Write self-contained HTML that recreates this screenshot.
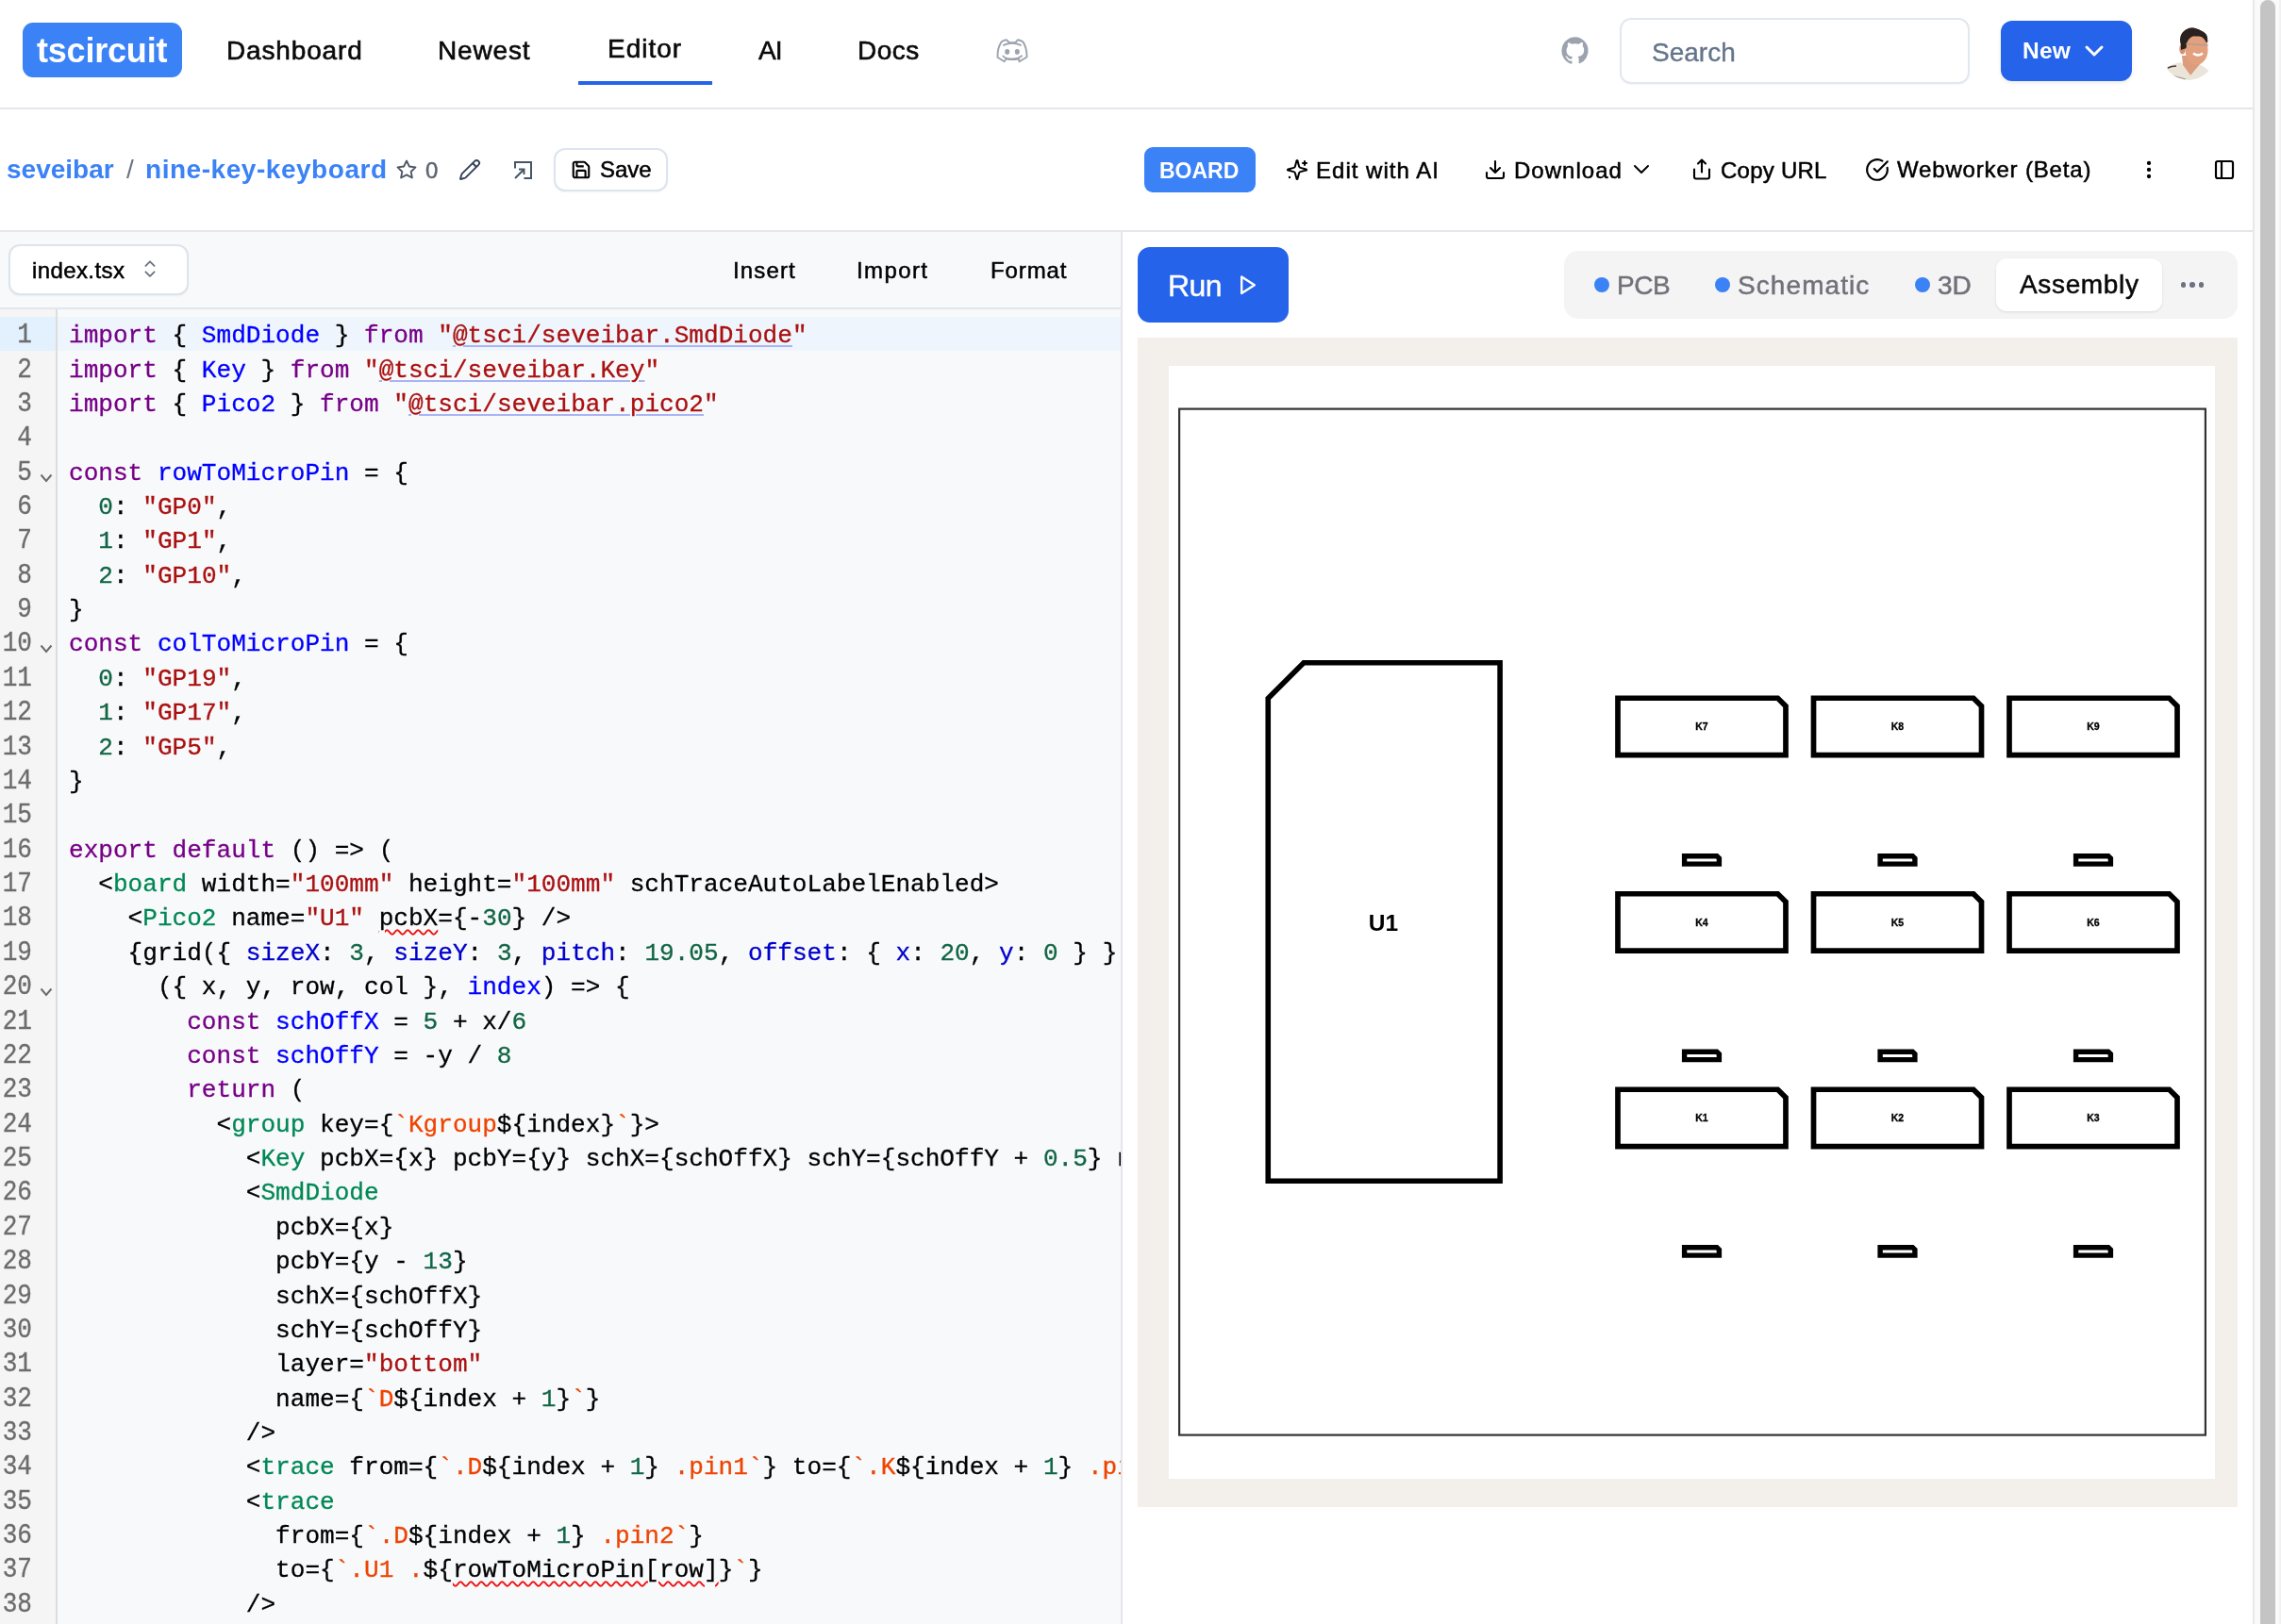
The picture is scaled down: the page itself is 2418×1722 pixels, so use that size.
<!DOCTYPE html>
<html><head><meta charset="utf-8"><title>tscircuit editor</title>
<style>
*{box-sizing:border-box;margin:0;padding:0}
html,body{width:2418px;height:1722px;overflow:hidden;background:#fff}
body{position:relative;font-family:"Liberation Sans",sans-serif}
.t{position:absolute;white-space:pre;will-change:transform}
.r{position:absolute}
.s{position:absolute;overflow:visible}
.code{position:absolute;white-space:pre;will-change:transform;-webkit-text-stroke:0.3px currentColor;font-family:"Liberation Mono",monospace;font-size:26.08px;line-height:36px;color:#000}
.k{color:#708}.d{color:#00f}.st{color:#a11}.n{color:#164}.tg{color:#085}.p{color:#00c}.o{color:#e40}
.ul{text-decoration:underline;text-decoration-color:#a9b4f5;text-decoration-thickness:2px;text-underline-offset:3px}
.sq{text-decoration:underline wavy #e11;text-decoration-thickness:1.5px;text-underline-offset:4px}
</style></head><body>

<div class="r" style="left:0px;top:0px;width:2388.00px;height:114.00px;background:#ffffff;border-radius:0px;"></div>
<div class="r" style="left:0px;top:114px;width:2388.00px;height:2.00px;background:#e4e6eb;border-radius:0px;"></div>
<div class="r" style="left:24px;top:24px;width:169.00px;height:58.00px;background:#3b82f6;border-radius:11px;"></div>
<div class="t " style="left:38.50px;top:36.13px;font-size:36px;line-height:36px;color:#fff;font-weight:700;letter-spacing:-0.2px;">tscircuit</div>
<div class="t " style="left:240.00px;top:40.30px;font-size:28px;line-height:28px;color:#0a0a0a;font-weight:400;letter-spacing:0.85px;-webkit-text-stroke:0.6px #0a0a0a;">Dashboard</div>
<div class="t " style="left:464.00px;top:40.30px;font-size:28px;line-height:28px;color:#0a0a0a;font-weight:400;letter-spacing:0.85px;-webkit-text-stroke:0.6px #0a0a0a;">Newest</div>
<div class="t " style="left:643.50px;top:38.00px;font-size:28px;line-height:28px;color:#0a0a0a;font-weight:400;letter-spacing:1.0px;-webkit-text-stroke:0.6px #0a0a0a;">Editor</div>
<div class="t " style="left:803.50px;top:40.30px;font-size:28px;line-height:28px;color:#0a0a0a;font-weight:400;letter-spacing:-1px;-webkit-text-stroke:0.6px #0a0a0a;">AI</div>
<div class="t " style="left:908.50px;top:40.30px;font-size:28px;line-height:28px;color:#0a0a0a;font-weight:400;letter-spacing:0.5px;-webkit-text-stroke:0.6px #0a0a0a;">Docs</div>
<div class="r" style="left:613px;top:86px;width:142.00px;height:4.00px;background:#2563eb;border-radius:0px;"></div>
<svg class="s" style="left:1040px;top:30px;" width="70" height="50" viewBox="0 0 70 50"><g fill="none" stroke="#9ca3af" stroke-width="1.9" stroke-linejoin="round" stroke-linecap="round"><path d="M17.5 30.8C17.3 24.5 18.8 18.5 21.5 14.4Q24 12.6 27.1 12.3L29.9 15.1L36.3 15.1L38.8 12.3Q42 12.6 44.6 14.6C47.2 18.5 48.6 24.5 48.5 30.5L40.6 35.3L39.7 32.3Q33 34 26.8 32.3L24.6 35.3Z"/><path d="M24 17.9Q33 13.6 41.9 17.9"/><path d="M23.4 29.5Q26 32.6 33 32.5Q40 32.6 43.1 29.2"/></g><ellipse cx="27.7" cy="24.9" rx="2.5" ry="2.8" fill="#9ca3af"/><ellipse cx="38.3" cy="24.9" rx="2.5" ry="2.8" fill="#9ca3af"/></svg>
<svg class="s" style="left:1655px;top:39px;" width="30" height="29" viewBox="0 0 24 24"><path fill="#9ca3af" d="M12 .3a12 12 0 0 0-3.8 23.4c.6.1.8-.3.8-.6v-2c-3.3.7-4-1.6-4-1.6-.6-1.4-1.4-1.8-1.4-1.8-1-.7.1-.7.1-.7 1.2.1 1.8 1.2 1.8 1.2 1 1.8 2.8 1.3 3.5 1 0-.8.4-1.3.7-1.6-2.7-.3-5.5-1.3-5.5-6 0-1.2.5-2.3 1.3-3.1-.2-.4-.6-1.6 0-3.2 0 0 1-.3 3.4 1.2a11.5 11.5 0 0 1 6 0C17.3 4.6 18.3 5 18.3 5c.6 1.6.2 2.8 0 3.2.9.8 1.3 1.9 1.3 3.2 0 4.6-2.8 5.6-5.5 5.9.5.4.9 1 .9 2.2v3.3c0 .3.1.7.8.6A12 12 0 0 0 12 .3"/></svg>
<div class="r" style="left:1717px;top:18.5px;width:371.00px;height:70.50px;background:#fff;border-radius:12px;border:2px solid #e2e8f0;box-shadow:0 1px 2px rgba(0,0,0,0.04);"></div>
<div class="t " style="left:1751.00px;top:41.50px;font-size:28px;line-height:28px;color:#64748b;font-weight:400;letter-spacing:0px;-webkit-text-stroke:0.35px #64748b;">Search</div>
<div class="r" style="left:2121px;top:22px;width:139.00px;height:64.00px;background:#2563eb;border-radius:12px;box-shadow:0 2px 4px rgba(0,0,0,0.08);"></div>
<div class="t " style="left:2144.00px;top:42.46px;font-size:24.5px;line-height:24.5px;color:#fff;font-weight:700;letter-spacing:0.2px;">New</div>
<svg class="s" style="left:2209px;top:46px;" width="22" height="16" viewBox="0 0 22 16"><path d="M3 4 L11 12 L19 4" fill="none" stroke="#fff" stroke-width="3" stroke-linecap="round" stroke-linejoin="round"/></svg>
<svg class="s" style="left:2290px;top:27px;" width="60" height="62" viewBox="0 0 60 62"><defs><clipPath id="av"><circle cx="30" cy="30" r="28"/></clipPath></defs>
<g clip-path="url(#av)">
<path d="M4 47 Q12 40 22 39 L31 52 L41 41 Q49 44 55 53 L58 62 L0 62 Z" fill="#ebe5d9"/>
<path d="M8 45 Q12 43 17 43" stroke="#4a4038" stroke-width="1.6" fill="none"/>
<path d="M12 53 Q20 55 27 57" stroke="#9d958a" stroke-width="1.2" fill="none"/>
<path d="M23 32 L24 42 L32 53 L42 41 L42 32 Z" fill="#dc9c7e"/>
<ellipse cx="35.5" cy="15" rx="14.5" ry="13" fill="#2a221e"/>
<ellipse cx="23.5" cy="25" rx="3.2" ry="5.5" fill="#d69070"/>
<ellipse cx="38.5" cy="26" rx="12" ry="15.5" fill="#e3a07e"/>
<path d="M22 26 L21.5 14 Q24 3 37 2.5 Q50 3 50.5 18 Q48 12 42 11.5 Q34 11.5 30 10 Q28 16 27.5 24 Z" fill="#2a221e"/>
<path d="M27 19.5 L51 21" stroke="#a19a95" stroke-width="1.2" fill="none"/>
<path d="M35 29.5 Q40 33.5 45 29.5" stroke="#fff" stroke-width="2.4" fill="none"/>
</g></svg>
<div class="r" style="left:0px;top:244px;width:2388.00px;height:2.00px;background:#e4e6eb;border-radius:0px;"></div>
<div class="t " style="left:7.00px;top:166.10px;font-size:28px;line-height:28px;color:#3b82f6;font-weight:700;letter-spacing:0px;">seveibar</div>
<div class="t " style="left:134.00px;top:166.10px;font-size:28px;line-height:28px;color:#6b7280;font-weight:400;letter-spacing:0px;">/</div>
<div class="t " style="left:153.50px;top:166.10px;font-size:28px;line-height:28px;color:#3b82f6;font-weight:700;letter-spacing:0.54px;">nine-key-keyboard</div>
<svg class="s" style="left:419px;top:168px;" width="24" height="23" viewBox="0 0 24 23"><path d="M12 2.5l2.9 6 6.6.9-4.8 4.6 1.2 6.5L12 17.4l-5.9 3.1 1.2-6.5L2.5 9.4l6.6-.9z" fill="none" stroke="#4b5563" stroke-width="1.8" stroke-linejoin="round"/></svg>
<div class="t " style="left:451.00px;top:168.68px;font-size:24px;line-height:24px;color:#5b6472;font-weight:400;letter-spacing:0px;-webkit-text-stroke:0.45px #5b6472;">0</div>
<svg class="s" style="left:486px;top:168px;" width="24" height="24" viewBox="0 0 24 24"><path d="M21.2 6.8a2.8 2.8 0 0 0-4-4L3.8 16.2a2 2 0 0 0-.5.8l-1.3 4.4a.5.5 0 0 0 .6.6l4.4-1.3a2 2 0 0 0 .8-.5z" fill="none" stroke="#334155" stroke-width="1.9" stroke-linejoin="round"/><path d="M15 5l4 4" stroke="#334155" stroke-width="1.9"/></svg>
<svg class="s" style="left:545px;top:171px;" width="19" height="19" viewBox="0 0 19 19"><path d="M1 7.5V1h17v17h-7.5" fill="none" stroke="#475569" stroke-width="2" stroke-linejoin="miter"/><path d="M1 18L10.5 8.5M5 8.5h5.5V14" fill="none" stroke="#475569" stroke-width="2"/></svg>
<div class="r" style="left:586.5px;top:156.5px;width:121.50px;height:46.50px;background:#fff;border-radius:12px;border:2px solid #dde4ee;box-shadow:0 1px 2px rgba(0,0,0,0.05);"></div>
<svg class="s" style="left:605px;top:169px;" width="22" height="22" viewBox="0 0 24 24"><path d="M15.2 3a2 2 0 0 1 1.4.6l3.8 3.8a2 2 0 0 1 .6 1.4V19a2 2 0 0 1-2 2H5a2 2 0 0 1-2-2V5a2 2 0 0 1 2-2z" fill="none" stroke="#000" stroke-width="2.3" stroke-linejoin="round"/><path d="M17 21v-7a1 1 0 0 0-1-1H8a1 1 0 0 0-1 1v7M7 3v4a1 1 0 0 0 1 1h7" fill="none" stroke="#000" stroke-width="2.3" stroke-linejoin="round"/></svg>
<div class="t " style="left:635.50px;top:168.28px;font-size:24px;line-height:24px;color:#000;font-weight:400;letter-spacing:0px;-webkit-text-stroke:0.5px #000;">Save</div>
<div class="r" style="left:1213px;top:156px;width:118.00px;height:48.00px;background:#3b82f6;border-radius:9px;"></div>
<div class="t " style="left:1229.00px;top:169.73px;font-size:23px;line-height:23px;color:#fff;font-weight:700;letter-spacing:0px;">BOARD</div>
<svg class="s" style="left:1362px;top:168px;" width="26" height="24" viewBox="0 0 24 24"><path d="M9.9 15.5a2 2 0 0 0-1.4-1.4l-6.1-1.6a.5.5 0 0 1 0-1L8.5 9.9a2 2 0 0 0 1.4-1.4l1.6-6.1a.5.5 0 0 1 1 0l1.6 6.1a2 2 0 0 0 1.4 1.4l6.1 1.6a.5.5 0 0 1 0 1l-6.1 1.6a2 2 0 0 0-1.4 1.4l-1.6 6.1a.5.5 0 0 1-1 0z" fill="none" stroke="#000" stroke-width="2" stroke-linejoin="round"/><path d="M20 3v4M22 5h-4" stroke="#000" stroke-width="2" stroke-linecap="round"/><circle cx="4" cy="20" r="1.2" fill="#000"/></svg>
<div class="t " style="left:1395.00px;top:168.68px;font-size:24px;line-height:24px;color:#000;font-weight:400;letter-spacing:1.02px;-webkit-text-stroke:0.5px #000;">Edit with AI</div>
<svg class="s" style="left:1573px;top:168px;" width="24" height="24" viewBox="0 0 24 24"><path d="M21 15v4a2 2 0 0 1-2 2H5a2 2 0 0 1-2-2v-4M7 10l5 5 5-5M12 15V3" fill="none" stroke="#000" stroke-width="2.1" stroke-linecap="round" stroke-linejoin="round"/></svg>
<div class="t " style="left:1605.00px;top:168.98px;font-size:24px;line-height:24px;color:#000;font-weight:400;letter-spacing:1.03px;-webkit-text-stroke:0.5px #000;">Download</div>
<svg class="s" style="left:1731px;top:173px;" width="18" height="14" viewBox="0 0 18 14"><path d="M2 3l7 7 7-7" fill="none" stroke="#000" stroke-width="2" stroke-linecap="round" stroke-linejoin="round"/></svg>
<svg class="s" style="left:1792px;top:167px;" width="24" height="25" viewBox="0 0 24 24"><path d="M4 12v8a2 2 0 0 0 2 2h12a2 2 0 0 0 2-2v-8M16 6l-4-4-4 4M12 2v13" fill="none" stroke="#000" stroke-width="2.1" stroke-linecap="round" stroke-linejoin="round"/></svg>
<div class="t " style="left:1823.50px;top:168.98px;font-size:24px;line-height:24px;color:#000;font-weight:400;letter-spacing:0.25px;-webkit-text-stroke:0.5px #000;">Copy URL</div>
<svg class="s" style="left:1977px;top:167px;" width="26" height="26" viewBox="0 0 24 24"><path d="M21.8 10A10 10 0 1 1 17 3.3" fill="none" stroke="#000" stroke-width="2" stroke-linecap="round"/><path d="M9 11l3 3L22 4" fill="none" stroke="#000" stroke-width="2" stroke-linecap="round" stroke-linejoin="round"/></svg>
<div class="t " style="left:2010.50px;top:168.48px;font-size:24px;line-height:24px;color:#000;font-weight:400;letter-spacing:0.83px;-webkit-text-stroke:0.5px #000;">Webworker (Beta)</div>
<svg class="s" style="left:2270px;top:168px;" width="16" height="24" viewBox="0 0 16 24"><circle cx="8" cy="4.9" r="2.15" fill="#000"/><circle cx="8" cy="11.95" r="2.15" fill="#000"/><circle cx="8" cy="19" r="2.15" fill="#000"/></svg>
<svg class="s" style="left:2346px;top:168px;" width="24" height="24" viewBox="0 0 24 24"><rect x="3" y="3" width="18" height="18" rx="2" fill="none" stroke="#000" stroke-width="2.2"/><path d="M9 3v18" stroke="#000" stroke-width="2.2"/></svg>
<div class="r" style="left:0px;top:246px;width:1188.00px;height:1476.00px;background:#f8f9fb;border-radius:0px;"></div>
<div class="r" style="left:1188px;top:246px;width:2.00px;height:1476.00px;background:#e4e6eb;border-radius:0px;"></div>
<div class="r" style="left:9px;top:259px;width:190.50px;height:53.50px;background:#fff;border-radius:12px;border:2px solid #dde4ee;box-shadow:0 1px 2px rgba(0,0,0,0.05);"></div>
<div class="t " style="left:33.50px;top:275.48px;font-size:24px;line-height:24px;color:#000;font-weight:400;letter-spacing:0.4px;-webkit-text-stroke:0.5px #000;">index.tsx</div>
<svg class="s" style="left:150px;top:275px;" width="18" height="22" viewBox="0 0 18 24"><path d="M4 7.5l5-5 5 5M4 14.5l5 5 5-5" fill="none" stroke="#6b7280" stroke-width="2" stroke-linecap="round" stroke-linejoin="round"/></svg>
<div class="t " style="left:776.50px;top:275.38px;font-size:24px;line-height:24px;color:#000;font-weight:400;letter-spacing:1.15px;-webkit-text-stroke:0.5px #000;">Insert</div>
<div class="t " style="left:907.50px;top:275.38px;font-size:24px;line-height:24px;color:#000;font-weight:400;letter-spacing:1.4px;-webkit-text-stroke:0.5px #000;">Import</div>
<div class="t " style="left:1049.50px;top:275.38px;font-size:24px;line-height:24px;color:#000;font-weight:400;letter-spacing:0.9px;-webkit-text-stroke:0.5px #000;">Format</div>
<div class="r" style="left:0px;top:326px;width:1188.00px;height:2.00px;background:#e4e6eb;border-radius:0px;"></div>
<div class="r" style="left:0px;top:328px;width:59.00px;height:1394.00px;background:#f5f5f5;border-radius:0px;"></div>
<div class="r" style="left:59px;top:328px;width:2.00px;height:1394.00px;background:#dddddd;border-radius:0px;"></div>
<div class="r" style="left:0px;top:336px;width:59.00px;height:36.00px;background:#e2f1fd;border-radius:0px;"></div>
<div class="r" style="left:61px;top:336px;width:1127.00px;height:36.00px;background:#eef5fc;border-radius:0px;"></div>
<div style="position:absolute;left:61px;top:328px;width:1127px;height:1394px;overflow:hidden">
<div class="code" style="left:12.35px;top:10.15px"><span class="k">import</span> { <span class="d">SmdDiode</span> } <span class="k">from</span> <span class="st">&quot;</span><span class="st ul">@tsci/seveibar.SmdDiode</span><span class="st">&quot;</span></div>
<div class="code" style="left:12.35px;top:46.52px"><span class="k">import</span> { <span class="d">Key</span> } <span class="k">from</span> <span class="st">&quot;</span><span class="st ul">@tsci/seveibar.Key</span><span class="st">&quot;</span></div>
<div class="code" style="left:12.35px;top:82.89px"><span class="k">import</span> { <span class="d">Pico2</span> } <span class="k">from</span> <span class="st">&quot;</span><span class="st ul">@tsci/seveibar.pico2</span><span class="st">&quot;</span></div>
<div class="code" style="left:12.35px;top:119.26px"></div>
<div class="code" style="left:12.35px;top:155.63px"><span class="k">const</span> <span class="d">rowToMicroPin</span> = {</div>
<div class="code" style="left:12.35px;top:192.00px">  <span class="n">0</span>: <span class="st">&quot;GP0&quot;</span>,</div>
<div class="code" style="left:12.35px;top:228.37px">  <span class="n">1</span>: <span class="st">&quot;GP1&quot;</span>,</div>
<div class="code" style="left:12.35px;top:264.74px">  <span class="n">2</span>: <span class="st">&quot;GP10&quot;</span>,</div>
<div class="code" style="left:12.35px;top:301.11px">}</div>
<div class="code" style="left:12.35px;top:337.48px"><span class="k">const</span> <span class="d">colToMicroPin</span> = {</div>
<div class="code" style="left:12.35px;top:373.85px">  <span class="n">0</span>: <span class="st">&quot;GP19&quot;</span>,</div>
<div class="code" style="left:12.35px;top:410.22px">  <span class="n">1</span>: <span class="st">&quot;GP17&quot;</span>,</div>
<div class="code" style="left:12.35px;top:446.59px">  <span class="n">2</span>: <span class="st">&quot;GP5&quot;</span>,</div>
<div class="code" style="left:12.35px;top:482.96px">}</div>
<div class="code" style="left:12.35px;top:519.33px"></div>
<div class="code" style="left:12.35px;top:555.70px"><span class="k">export</span> <span class="k">default</span> () =&gt; (</div>
<div class="code" style="left:12.35px;top:592.07px">  &lt;<span class="tg">board</span> width=<span class="st">&quot;100mm&quot;</span> height=<span class="st">&quot;100mm&quot;</span> schTraceAutoLabelEnabled&gt;</div>
<div class="code" style="left:12.35px;top:628.44px">    &lt;<span class="tg">Pico2</span> name=<span class="st">&quot;U1&quot;</span> <span class="sq">pcbX</span>={-<span class="n">30</span>} /&gt;</div>
<div class="code" style="left:12.35px;top:664.81px">    {grid({ <span class="p">sizeX</span>: <span class="n">3</span>, <span class="p">sizeY</span>: <span class="n">3</span>, <span class="p">pitch</span>: <span class="n">19.05</span>, <span class="p">offset</span>: { <span class="p">x</span>: <span class="n">20</span>, <span class="p">y</span>: <span class="n">0</span> } })</div>
<div class="code" style="left:12.35px;top:701.18px">      ({ x, y, row, col }, <span class="d">index</span>) =&gt; {</div>
<div class="code" style="left:12.35px;top:737.55px">        <span class="k">const</span> <span class="d">schOffX</span> = <span class="n">5</span> + x/<span class="n">6</span></div>
<div class="code" style="left:12.35px;top:773.92px">        <span class="k">const</span> <span class="d">schOffY</span> = -y / <span class="n">8</span></div>
<div class="code" style="left:12.35px;top:810.29px">        <span class="k">return</span> (</div>
<div class="code" style="left:12.35px;top:846.66px">          &lt;<span class="tg">group</span> key={<span class="o">`Kgroup</span>${index}<span class="o">`</span>}&gt;</div>
<div class="code" style="left:12.35px;top:883.03px">            &lt;<span class="tg">Key</span> pcbX={x} pcbY={y} schX={schOffX} schY={schOffY + <span class="n">0.5</span>} name={</div>
<div class="code" style="left:12.35px;top:919.40px">            &lt;<span class="tg">SmdDiode</span></div>
<div class="code" style="left:12.35px;top:955.77px">              pcbX={x}</div>
<div class="code" style="left:12.35px;top:992.14px">              pcbY={y - <span class="n">13</span>}</div>
<div class="code" style="left:12.35px;top:1028.51px">              schX={schOffX}</div>
<div class="code" style="left:12.35px;top:1064.88px">              schY={schOffY}</div>
<div class="code" style="left:12.35px;top:1101.25px">              layer=<span class="st">&quot;bottom&quot;</span></div>
<div class="code" style="left:12.35px;top:1137.62px">              name={<span class="o">`D</span>${index + <span class="n">1</span>}<span class="o">`</span>}</div>
<div class="code" style="left:12.35px;top:1173.99px">            /&gt;</div>
<div class="code" style="left:12.35px;top:1210.36px">            &lt;<span class="tg">trace</span> from={<span class="o">`.D</span>${index + <span class="n">1</span>}<span class="o"> .pin1`</span>} to={<span class="o">`.K</span>${index + <span class="n">1</span>}<span class="o"> .pin1`</span>} /&gt;</div>
<div class="code" style="left:12.35px;top:1246.73px">            &lt;<span class="tg">trace</span></div>
<div class="code" style="left:12.35px;top:1283.10px">              from={<span class="o">`.D</span>${index + <span class="n">1</span>}<span class="o"> .pin2`</span>}</div>
<div class="code" style="left:12.35px;top:1319.47px">              to={<span class="o">`.U1 .</span>${<span class="sq">rowToMicroPin[row]</span>}<span class="o">`</span>}</div>
<div class="code" style="left:12.35px;top:1355.84px">            /&gt;</div>
</div>
<div class="code" style="left:0px;width:34px;text-align:right;top:338.15px;color:#6c6c6c;transform:scaleY(1.1);transform-origin:0 24.95px">1</div>
<div class="code" style="left:0px;width:34px;text-align:right;top:374.52px;color:#6c6c6c;transform:scaleY(1.1);transform-origin:0 24.95px">2</div>
<div class="code" style="left:0px;width:34px;text-align:right;top:410.89px;color:#6c6c6c;transform:scaleY(1.1);transform-origin:0 24.95px">3</div>
<div class="code" style="left:0px;width:34px;text-align:right;top:447.26px;color:#6c6c6c;transform:scaleY(1.1);transform-origin:0 24.95px">4</div>
<div class="code" style="left:0px;width:34px;text-align:right;top:483.63px;color:#6c6c6c;transform:scaleY(1.1);transform-origin:0 24.95px">5</div>
<div class="code" style="left:0px;width:34px;text-align:right;top:520.00px;color:#6c6c6c;transform:scaleY(1.1);transform-origin:0 24.95px">6</div>
<div class="code" style="left:0px;width:34px;text-align:right;top:556.37px;color:#6c6c6c;transform:scaleY(1.1);transform-origin:0 24.95px">7</div>
<div class="code" style="left:0px;width:34px;text-align:right;top:592.74px;color:#6c6c6c;transform:scaleY(1.1);transform-origin:0 24.95px">8</div>
<div class="code" style="left:0px;width:34px;text-align:right;top:629.11px;color:#6c6c6c;transform:scaleY(1.1);transform-origin:0 24.95px">9</div>
<div class="code" style="left:0px;width:34px;text-align:right;top:665.48px;color:#6c6c6c;transform:scaleY(1.1);transform-origin:0 24.95px">10</div>
<div class="code" style="left:0px;width:34px;text-align:right;top:701.85px;color:#6c6c6c;transform:scaleY(1.1);transform-origin:0 24.95px">11</div>
<div class="code" style="left:0px;width:34px;text-align:right;top:738.22px;color:#6c6c6c;transform:scaleY(1.1);transform-origin:0 24.95px">12</div>
<div class="code" style="left:0px;width:34px;text-align:right;top:774.59px;color:#6c6c6c;transform:scaleY(1.1);transform-origin:0 24.95px">13</div>
<div class="code" style="left:0px;width:34px;text-align:right;top:810.96px;color:#6c6c6c;transform:scaleY(1.1);transform-origin:0 24.95px">14</div>
<div class="code" style="left:0px;width:34px;text-align:right;top:847.33px;color:#6c6c6c;transform:scaleY(1.1);transform-origin:0 24.95px">15</div>
<div class="code" style="left:0px;width:34px;text-align:right;top:883.70px;color:#6c6c6c;transform:scaleY(1.1);transform-origin:0 24.95px">16</div>
<div class="code" style="left:0px;width:34px;text-align:right;top:920.07px;color:#6c6c6c;transform:scaleY(1.1);transform-origin:0 24.95px">17</div>
<div class="code" style="left:0px;width:34px;text-align:right;top:956.44px;color:#6c6c6c;transform:scaleY(1.1);transform-origin:0 24.95px">18</div>
<div class="code" style="left:0px;width:34px;text-align:right;top:992.81px;color:#6c6c6c;transform:scaleY(1.1);transform-origin:0 24.95px">19</div>
<div class="code" style="left:0px;width:34px;text-align:right;top:1029.18px;color:#6c6c6c;transform:scaleY(1.1);transform-origin:0 24.95px">20</div>
<div class="code" style="left:0px;width:34px;text-align:right;top:1065.55px;color:#6c6c6c;transform:scaleY(1.1);transform-origin:0 24.95px">21</div>
<div class="code" style="left:0px;width:34px;text-align:right;top:1101.92px;color:#6c6c6c;transform:scaleY(1.1);transform-origin:0 24.95px">22</div>
<div class="code" style="left:0px;width:34px;text-align:right;top:1138.29px;color:#6c6c6c;transform:scaleY(1.1);transform-origin:0 24.95px">23</div>
<div class="code" style="left:0px;width:34px;text-align:right;top:1174.66px;color:#6c6c6c;transform:scaleY(1.1);transform-origin:0 24.95px">24</div>
<div class="code" style="left:0px;width:34px;text-align:right;top:1211.03px;color:#6c6c6c;transform:scaleY(1.1);transform-origin:0 24.95px">25</div>
<div class="code" style="left:0px;width:34px;text-align:right;top:1247.40px;color:#6c6c6c;transform:scaleY(1.1);transform-origin:0 24.95px">26</div>
<div class="code" style="left:0px;width:34px;text-align:right;top:1283.77px;color:#6c6c6c;transform:scaleY(1.1);transform-origin:0 24.95px">27</div>
<div class="code" style="left:0px;width:34px;text-align:right;top:1320.14px;color:#6c6c6c;transform:scaleY(1.1);transform-origin:0 24.95px">28</div>
<div class="code" style="left:0px;width:34px;text-align:right;top:1356.51px;color:#6c6c6c;transform:scaleY(1.1);transform-origin:0 24.95px">29</div>
<div class="code" style="left:0px;width:34px;text-align:right;top:1392.88px;color:#6c6c6c;transform:scaleY(1.1);transform-origin:0 24.95px">30</div>
<div class="code" style="left:0px;width:34px;text-align:right;top:1429.25px;color:#6c6c6c;transform:scaleY(1.1);transform-origin:0 24.95px">31</div>
<div class="code" style="left:0px;width:34px;text-align:right;top:1465.62px;color:#6c6c6c;transform:scaleY(1.1);transform-origin:0 24.95px">32</div>
<div class="code" style="left:0px;width:34px;text-align:right;top:1501.99px;color:#6c6c6c;transform:scaleY(1.1);transform-origin:0 24.95px">33</div>
<div class="code" style="left:0px;width:34px;text-align:right;top:1538.36px;color:#6c6c6c;transform:scaleY(1.1);transform-origin:0 24.95px">34</div>
<div class="code" style="left:0px;width:34px;text-align:right;top:1574.73px;color:#6c6c6c;transform:scaleY(1.1);transform-origin:0 24.95px">35</div>
<div class="code" style="left:0px;width:34px;text-align:right;top:1611.10px;color:#6c6c6c;transform:scaleY(1.1);transform-origin:0 24.95px">36</div>
<div class="code" style="left:0px;width:34px;text-align:right;top:1647.47px;color:#6c6c6c;transform:scaleY(1.1);transform-origin:0 24.95px">37</div>
<div class="code" style="left:0px;width:34px;text-align:right;top:1683.84px;color:#6c6c6c;transform:scaleY(1.1);transform-origin:0 24.95px">38</div>
<svg class="s" style="left:42px;top:501.58000000000004px;" width="14" height="10" viewBox="0 0 14 10"><path d="M1.5 1.5L7 8l5.5-6.5" fill="none" stroke="#6c6c6c" stroke-width="2"/></svg>
<svg class="s" style="left:42px;top:683.4300000000001px;" width="14" height="10" viewBox="0 0 14 10"><path d="M1.5 1.5L7 8l5.5-6.5" fill="none" stroke="#6c6c6c" stroke-width="2"/></svg>
<svg class="s" style="left:42px;top:1047.13px;" width="14" height="10" viewBox="0 0 14 10"><path d="M1.5 1.5L7 8l5.5-6.5" fill="none" stroke="#6c6c6c" stroke-width="2"/></svg>
<div class="r" style="left:1206px;top:262px;width:160.00px;height:80.00px;background:#2563eb;border-radius:13px;"></div>
<div class="t " style="left:1238.00px;top:287.21px;font-size:32px;line-height:32px;color:#fff;font-weight:400;letter-spacing:-0.6px;-webkit-text-stroke:0.4px #fff;">Run</div>
<svg class="s" style="left:1312px;top:289px;" width="22" height="26" viewBox="0 0 22 26"><path d="M4.2 4.5v17.5l13.6-8.75z" fill="none" stroke="#fff" stroke-width="2.4" stroke-linejoin="round"/></svg>
<div class="r" style="left:1658px;top:266px;width:714.00px;height:72.00px;background:#f4f4f5;border-radius:15px;"></div>
<div class="r" style="left:2116px;top:274px;width:176.00px;height:56.00px;background:#fff;border-radius:11px;box-shadow:0 1px 3px rgba(0,0,0,0.10);"></div>
<div class="r" style="left:1690px;top:294px;width:16px;height:16px;border-radius:50%;background:#3b82f6"></div>
<div class="r" style="left:1818px;top:294px;width:16px;height:16px;border-radius:50%;background:#3b82f6"></div>
<div class="r" style="left:2030px;top:294px;width:16px;height:16px;border-radius:50%;background:#3b82f6"></div>
<div class="t " style="left:1714.00px;top:288.60px;font-size:28px;line-height:28px;color:#71717a;font-weight:400;letter-spacing:-0.4px;-webkit-text-stroke:0.5px #71717a;">PCB</div>
<div class="t " style="left:1842.00px;top:288.60px;font-size:28px;line-height:28px;color:#71717a;font-weight:400;letter-spacing:1.08px;-webkit-text-stroke:0.5px #71717a;">Schematic</div>
<div class="t " style="left:2053.50px;top:288.60px;font-size:28px;line-height:28px;color:#71717a;font-weight:400;letter-spacing:0px;-webkit-text-stroke:0.5px #71717a;">3D</div>
<div class="t " style="left:2141.00px;top:288.30px;font-size:28px;line-height:28px;color:#09090b;font-weight:400;letter-spacing:0.65px;-webkit-text-stroke:0.5px #09090b;">Assembly</div>
<div class="r" style="left:2311.7px;top:299.3px;width:5.6px;height:5.6px;border-radius:50%;background:#6b7280"></div>
<div class="r" style="left:2321.2px;top:299.3px;width:5.6px;height:5.6px;border-radius:50%;background:#6b7280"></div>
<div class="r" style="left:2330.7px;top:299.3px;width:5.6px;height:5.6px;border-radius:50%;background:#6b7280"></div>
<div class="r" style="left:1206px;top:358px;width:1166.00px;height:1240.00px;background:#f3f0eb;border-radius:0px;"></div>
<div class="r" style="left:1239px;top:388px;width:1109.00px;height:1180.00px;background:#fff;border-radius:0px;"></div>
<svg class="s" style="left:0;top:0" width="2418" height="1722" viewBox="0 0 2418 1722"><rect x="1250.1" y="433.6" width="1087.8" height="1088" fill="none" stroke="#333" stroke-width="2.2"/><path d="M1344.25 740.5 L1382 702.75 L1590.1 702.75 L1590.1 1252.25 L1344.25 1252.25 Z" fill="none" stroke="#000" stroke-width="5.6" stroke-linejoin="miter"/><text x="1466.5" y="987.1" font-family="Liberation Sans" font-weight="700" font-size="24.5" text-anchor="middle" fill="#000">U1</text><path d="M1715 740.25 L1884.5 740.25 L1893 748.75 L1893 800.55 L1715 800.55 Z" fill="none" stroke="#000" stroke-width="5.7"/><text x="1804" y="774.1" font-family="Liberation Sans" font-weight="700" font-size="10.5" text-anchor="middle" fill="#000" stroke="#000" stroke-width="0.35">K7</text><path d="M1785.6 907.6999999999999 L1819.9 907.6999999999999 L1822.4 910.1999999999999 L1822.4 916.1 L1785.6 916.1 Z" fill="none" stroke="#000" stroke-width="5.4"/><path d="M1922.5 740.25 L2092.0 740.25 L2100.5 748.75 L2100.5 800.55 L1922.5 800.55 Z" fill="none" stroke="#000" stroke-width="5.7"/><text x="2011.5" y="774.1" font-family="Liberation Sans" font-weight="700" font-size="10.5" text-anchor="middle" fill="#000" stroke="#000" stroke-width="0.35">K8</text><path d="M1993.1 907.6999999999999 L2027.4 907.6999999999999 L2029.9 910.1999999999999 L2029.9 916.1 L1993.1 916.1 Z" fill="none" stroke="#000" stroke-width="5.4"/><path d="M2130 740.25 L2299.5 740.25 L2308 748.75 L2308 800.55 L2130 800.55 Z" fill="none" stroke="#000" stroke-width="5.7"/><text x="2219" y="774.1" font-family="Liberation Sans" font-weight="700" font-size="10.5" text-anchor="middle" fill="#000" stroke="#000" stroke-width="0.35">K9</text><path d="M2200.6 907.6999999999999 L2234.9 907.6999999999999 L2237.4 910.1999999999999 L2237.4 916.1 L2200.6 916.1 Z" fill="none" stroke="#000" stroke-width="5.4"/><path d="M1715 947.75 L1884.5 947.75 L1893 956.25 L1893 1008.05 L1715 1008.05 Z" fill="none" stroke="#000" stroke-width="5.7"/><text x="1804" y="981.6" font-family="Liberation Sans" font-weight="700" font-size="10.5" text-anchor="middle" fill="#000" stroke="#000" stroke-width="0.35">K4</text><path d="M1785.6 1115.2 L1819.9 1115.2 L1822.4 1117.7 L1822.4 1123.6000000000001 L1785.6 1123.6000000000001 Z" fill="none" stroke="#000" stroke-width="5.4"/><path d="M1922.5 947.75 L2092.0 947.75 L2100.5 956.25 L2100.5 1008.05 L1922.5 1008.05 Z" fill="none" stroke="#000" stroke-width="5.7"/><text x="2011.5" y="981.6" font-family="Liberation Sans" font-weight="700" font-size="10.5" text-anchor="middle" fill="#000" stroke="#000" stroke-width="0.35">K5</text><path d="M1993.1 1115.2 L2027.4 1115.2 L2029.9 1117.7 L2029.9 1123.6000000000001 L1993.1 1123.6000000000001 Z" fill="none" stroke="#000" stroke-width="5.4"/><path d="M2130 947.75 L2299.5 947.75 L2308 956.25 L2308 1008.05 L2130 1008.05 Z" fill="none" stroke="#000" stroke-width="5.7"/><text x="2219" y="981.6" font-family="Liberation Sans" font-weight="700" font-size="10.5" text-anchor="middle" fill="#000" stroke="#000" stroke-width="0.35">K6</text><path d="M2200.6 1115.2 L2234.9 1115.2 L2237.4 1117.7 L2237.4 1123.6000000000001 L2200.6 1123.6000000000001 Z" fill="none" stroke="#000" stroke-width="5.4"/><path d="M1715 1155.25 L1884.5 1155.25 L1893 1163.75 L1893 1215.5500000000002 L1715 1215.5500000000002 Z" fill="none" stroke="#000" stroke-width="5.7"/><text x="1804" y="1189.1000000000001" font-family="Liberation Sans" font-weight="700" font-size="10.5" text-anchor="middle" fill="#000" stroke="#000" stroke-width="0.35">K1</text><path d="M1785.6 1322.7 L1819.9 1322.7 L1822.4 1325.2 L1822.4 1331.1000000000001 L1785.6 1331.1000000000001 Z" fill="none" stroke="#000" stroke-width="5.4"/><path d="M1922.5 1155.25 L2092.0 1155.25 L2100.5 1163.75 L2100.5 1215.5500000000002 L1922.5 1215.5500000000002 Z" fill="none" stroke="#000" stroke-width="5.7"/><text x="2011.5" y="1189.1000000000001" font-family="Liberation Sans" font-weight="700" font-size="10.5" text-anchor="middle" fill="#000" stroke="#000" stroke-width="0.35">K2</text><path d="M1993.1 1322.7 L2027.4 1322.7 L2029.9 1325.2 L2029.9 1331.1000000000001 L1993.1 1331.1000000000001 Z" fill="none" stroke="#000" stroke-width="5.4"/><path d="M2130 1155.25 L2299.5 1155.25 L2308 1163.75 L2308 1215.5500000000002 L2130 1215.5500000000002 Z" fill="none" stroke="#000" stroke-width="5.7"/><text x="2219" y="1189.1000000000001" font-family="Liberation Sans" font-weight="700" font-size="10.5" text-anchor="middle" fill="#000" stroke="#000" stroke-width="0.35">K3</text><path d="M2200.6 1322.7 L2234.9 1322.7 L2237.4 1325.2 L2237.4 1331.1000000000001 L2200.6 1331.1000000000001 Z" fill="none" stroke="#000" stroke-width="5.4"/></svg>
<div class="r" style="left:2388px;top:0px;width:30.00px;height:1722.00px;background:#fafafa;border-radius:0px;"></div>
<div class="r" style="left:2388px;top:0px;width:2.00px;height:1722.00px;background:#e8e8e8;border-radius:0px;"></div>
<div class="r" style="left:2416px;top:0px;width:2.00px;height:1722.00px;background:#f1f1f1;border-radius:0px;"></div>
<div class="r" style="left:2396px;top:0px;width:16.00px;height:1722.00px;background:#c4c4c4;border-radius:0px;border-radius:8px 8px 0 0;"></div>
</body></html>
